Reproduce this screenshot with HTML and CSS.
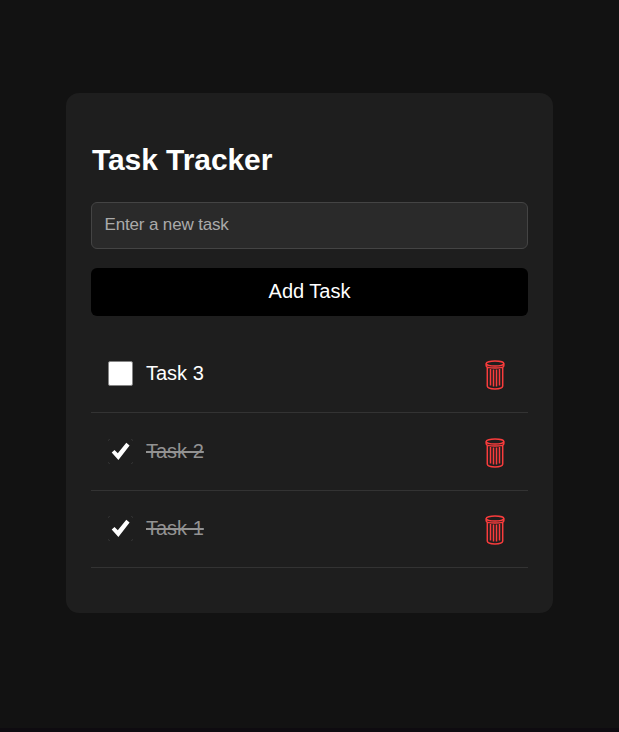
FILE: index.html
```html
<!DOCTYPE html>
<html lang="en">
<head>
<meta charset="utf-8">
<title>Task Tracker</title>
<link rel="stylesheet" href="styles.css">
</head>
<body>
<svg class="defs" aria-hidden="true">
  <symbol id="trash" viewBox="0 0 20 30">
    <ellipse cx="10" cy="3.6" rx="8.8" ry="2.5"/>
    <path d="M1.200 3.600v2.400c0 1.200 3.900 2 8.800 2s8.800-.8 8.800-2V3.600M2.300 7v19.200C2.500 28 5.800 29 10 29s7.500-1 7.700-2.800V7"/>
    <path d="M5.500 9v16.500M8.500 9.500v17M11.500 9.500v17M14.500 9v16.500"/>
  </symbol>
  <symbol id="check" viewBox="0 0 25 25">
    <path d="M3.700 13.600L6.500 11L9.800 14.300L18.300 3.800L21.600 6.400L10.400 20.900Z"/>
  </symbol>
</svg>
<main class="card">
  <h1>Task Tracker</h1>
  <input class="entry" type="text" placeholder="Enter a new task">
  <button class="add">Add Task</button>
  <ul class="tasks">
    <li><span class="box"></span><span class="name">Task 3</span><svg class="trash"><use href="#trash"/></svg></li>
    <li class="done"><span class="box"><svg><use href="#check"/></svg></span><span class="name">Task 2</span><svg class="trash"><use href="#trash"/></svg></li>
    <li class="done"><span class="box"><svg><use href="#check"/></svg></span><span class="name">Task 1</span><svg class="trash"><use href="#trash"/></svg></li>
  </ul>
</main>
</body>
</html>
```
FILE: styles.css
```css
* { box-sizing: border-box; }
body {
  margin: 0;
  height: 732px;
  padding-top: 93px;
  background: #121212;
  border-bottom: 4px solid #0e0b10;
  color: #fff;
  font-family: "Liberation Sans", Arial, sans-serif;
  overflow: hidden;
}
.defs { display: none; }
.card {
  width: 487px;
  height: 520px;
  margin: 0 auto;
  padding: 49px 25px 0;
  background: #1e1e1e;
  border-radius: 13px;
}
h1 {
  margin: 0 0 25px;
  padding-left: 1px;
  font-size: 30px;
  line-height: 35px;
  letter-spacing: -0.08px;
}
.entry {
  display: block;
  width: 100%;
  height: 47px;
  padding: 0 12.5px 2px;
  border: 1px solid #444;
  border-radius: 6px;
  background: #2a2a2a;
  color: #fff;
  font: 17px "Liberation Sans", Arial, sans-serif;
  letter-spacing: -0.15px;
}
.entry::placeholder { color: #aaa; }
.add {
  display: block;
  width: 100%;
  height: 48px;
  margin-top: 19px;
  padding: 0 0 2px;
  border: 0;
  border-radius: 6px;
  background: #000;
  color: #fff;
  font: 20px "Liberation Sans", Arial, sans-serif;
}
.tasks {
  margin: 19px 0 0;
  padding: 0;
  list-style: none;
}
.tasks li {
  display: flex;
  align-items: center;
  height: 78px;
  padding: 0 23.5px 0 17px;
  border-bottom: 1px solid #333;
  font-size: 20px;
}
.tasks li:last-child {
  height: 77px;
  padding-bottom: 1px;
}
.box {
  width: 25px;
  height: 25px;
  border: 1px solid #858585;
  border-radius: 2px;
  background: #fff;
}
.name {
  flex: 1;
  margin-left: 13px;
}
.trash {
  width: 20px;
  height: 30px;
  margin-top: 3px;
  fill: none;
  stroke: #fa3c3c;
  stroke-width: 1.5;
}
.done .box {
  border: 0;
  background:
    linear-gradient(135deg, #343434 2px, transparent 2px, transparent calc(100% - 2px), #343434 calc(100% - 2px)),
    linear-gradient(45deg, #343434 2px, transparent 2px, transparent calc(100% - 2px), #343434 calc(100% - 2px));
}
.done .box svg {
  display: block;
  width: 25px;
  height: 25px;
  fill: #fff;
}
.done .name {
  color: #929292;
  text-decoration: line-through;
}
```
